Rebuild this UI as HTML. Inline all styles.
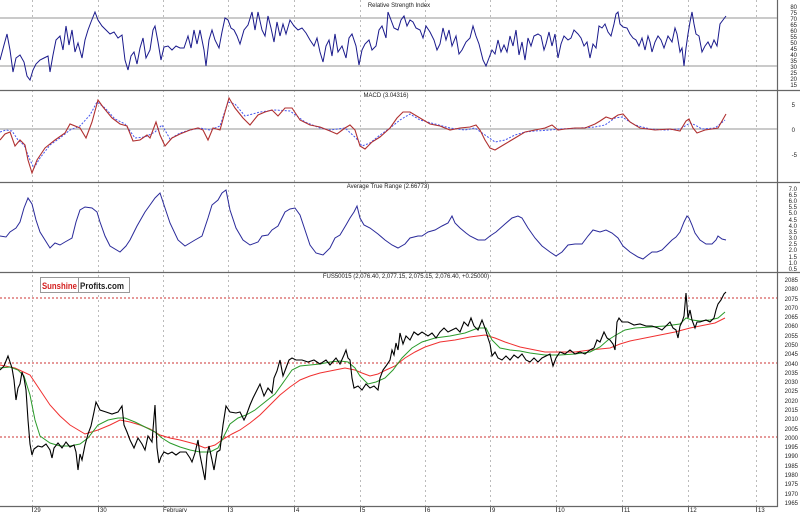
<!DOCTYPE html>
<html><head><meta charset="utf-8"><style>
html,body{margin:0;padding:0;background:#fff;}
svg{display:block;font-family:"Liberation Sans",sans-serif;}
</style></head><body>
<svg width="800" height="512" viewBox="0 0 800 512" xmlns="http://www.w3.org/2000/svg">
<rect width="800" height="512" fill="#fff"/>
<g stroke="#bbb" stroke-width="1" stroke-dasharray="2,3">
<line x1="32.5" y1="0" x2="32.5" y2="506"/><line x1="98.5" y1="0" x2="98.5" y2="506"/>
<line x1="163.5" y1="0" x2="163.5" y2="506"/><line x1="228.5" y1="0" x2="228.5" y2="506"/>
<line x1="294.5" y1="0" x2="294.5" y2="506"/><line x1="360.5" y1="0" x2="360.5" y2="506"/>
<line x1="425.5" y1="0" x2="425.5" y2="506"/><line x1="490.5" y1="0" x2="490.5" y2="506"/>
<line x1="556.5" y1="0" x2="556.5" y2="506"/><line x1="622.5" y1="0" x2="622.5" y2="506"/>
<line x1="688.5" y1="0" x2="688.5" y2="506"/><line x1="756.5" y1="0" x2="756.5" y2="506"/>
</g>
<g stroke="#666" stroke-width="1.2">
<line x1="0" y1="90.5" x2="800" y2="90.5"/><line x1="0" y1="182.5" x2="800" y2="182.5"/>
<line x1="0" y1="272.5" x2="800" y2="272.5"/><line x1="0" y1="506.5" x2="778" y2="506.5"/>
<line x1="777.5" y1="0" x2="777.5" y2="507"/>
</g>
<g stroke="#aaa" stroke-width="1.2">
<line x1="0" y1="18" x2="777" y2="18"/><line x1="0" y1="66" x2="777" y2="66"/>
<line x1="0" y1="129" x2="777" y2="129"/>
</g>
<g font-size="6" fill="#222">
<text x="399" y="7" text-anchor="middle">Relative Strength Index</text>
<text x="386" y="97" text-anchor="middle">MACD (3.04316)</text>
<text x="388" y="188" text-anchor="middle">Average True Range (2.66773)</text>
<text x="406" y="278" text-anchor="middle">FUS50015 (2,076.40, 2,077.15, 2,075.15, 2,076.40, +0.25000)</text>
</g>
<polyline fill="none" stroke="#1a1a8c" stroke-width="1" points="0,60 4,45 7,34 10,50 13,72 16,58 20,55 24,62 27,76 30,80 33,70 36,64 40,60 44,58 48,56 50,72 53,55 56,40 60,36 63,50 66,26 69,45 72,30 75,52 78,43 82,58 85,40 88,30 91,22 95,12 98,20 102,26 106,30 110,34 114,32 118,38 122,35 125,60 128,70 131,56 134,52 137,64 140,48 143,38 146,58 150,50 153,30 155,26 158,42 161,60 164,47 168,46 172,50 176,46 180,48 184,48 188,36 191,48 194,30 197,44 200,30 204,50 206,66 209,40 212,30 215,40 219,48 222,32 225,18 228,20 231,28 234,30 237,36 240,44 244,30 248,25 252,12 255,30 258,12 262,30 265,36 268,16 271,28 274,42 277,22 280,36 283,24 286,34 290,20 294,26 298,30 302,28 306,33 310,40 314,46 317,38 320,52 323,62 326,46 329,40 332,56 335,34 338,52 342,46 346,58 349,38 352,34 356,46 359,65 362,50 365,44 369,40 372,50 376,46 379,30 382,26 386,38 388,12 391,20 394,28 398,30 401,20 404,16 407,26 410,20 413,22 416,28 420,30 423,38 426,26 430,32 434,40 437,50 440,44 443,28 446,40 449,30 452,46 456,36 459,54 462,50 466,42 470,38 473,26 476,36 479,44 483,60 486,66 489,58 492,50 495,54 498,40 501,52 504,45 507,52 510,36 513,46 516,30 519,55 522,42 525,60 528,38 531,46 534,36 538,34 541,36 544,50 546,44 549,32 552,46 555,34 558,58 561,44 564,36 568,40 571,38 574,30 578,34 581,38 584,46 587,42 590,58 593,44 596,48 599,26 602,28 605,24 608,32 611,36 614,24 616,14 618,12 620,24 623,27 627,28 630,34 633,38 636,40 639,46 642,38 645,50 648,36 650,42 652,52 655,42 658,36 661,40 664,48 668,36 672,42 675,28 677,34 680,52 682,48 684,66 686,48 688,34 690,22 692,12 694,24 696,34 699,36 702,52 705,46 708,42 711,48 714,40 717,46 720,24 723,20 726,16"/>
<polyline fill="none" stroke="#4455ee" stroke-width="1" stroke-dasharray="2,1.5" points="0,132 6,130 12,131 18,140 24,145 30,160 34,168 40,158 50,145 60,138 70,130 80,126 90,115 97,102 105,108 115,119 125,124 135,138 145,137 155,132 162,125 170,139 180,133 190,130 200,128 210,130 220,126 228,102 235,104 245,116 260,112 275,110 290,111 305,122 320,128 330,130 345,128 356,138 362,146 370,143 380,135 390,128 400,120 410,114 420,120 435,124 450,128 465,130 475,128 485,135 495,142 505,140 515,135 525,132 535,131 550,130 560,129 580,128 595,127 605,125 615,118 622,117 635,125 650,129 665,130 680,129 690,123 695,125 702,129 715,128 725,120"/>
<polyline fill="none" stroke="#b03030" stroke-width="1.1" points="0,140 5,134 10,132 15,146 20,140 25,145 28,160 32,173 37,160 45,148 55,140 65,133 70,124 80,128 86,138 92,122 98,100 103,107 112,118 120,124 127,126 133,141 140,140 147,135 150,138 156,122 160,135 165,146 172,138 180,134 190,130 198,128 203,130 208,140 213,128 220,130 225,112 229,98 235,108 243,118 250,125 258,115 265,112 272,110 278,116 285,108 292,108 300,120 310,125 320,127 330,131 337,134 345,128 350,125 355,130 360,146 365,149 372,142 380,137 390,128 397,118 403,112 410,112 420,118 430,124 440,126 450,130 460,128 470,127 476,125 480,130 485,140 490,148 495,150 505,144 515,138 525,132 535,130 545,128 552,125 558,130 565,129 575,128 585,128 595,124 600,121 606,117 612,119 618,115 623,114 630,122 640,128 655,130 670,129 680,131 686,121 689,119 693,128 697,133 705,130 712,129 718,128 722,121 726,114"/>
<polyline fill="none" stroke="#2a2a9a" stroke-width="1" points="0,236 6,237 10,232 16,228 20,222 24,208 28,198 32,204 36,220 40,232 45,240 50,248 55,243 60,245 65,242 72,238 76,222 80,210 85,207 92,208 97,212 100,222 105,236 110,246 120,252 126,246 130,240 137,226 145,212 150,205 155,198 160,193 164,205 170,223 178,240 185,246 190,243 195,240 202,236 208,218 212,205 218,200 222,193 226,190 230,210 236,228 243,240 250,245 258,242 262,236 268,235 272,230 278,226 285,212 290,209 295,208 300,215 305,230 310,245 316,253 323,255 330,248 335,238 340,235 346,225 350,218 354,212 357,206 360,218 364,225 370,228 378,234 385,240 392,245 398,248 405,244 410,238 418,236 422,236 428,232 435,230 442,226 448,223 452,216 455,223 460,228 466,233 470,236 478,240 485,240 490,236 496,232 505,224 512,218 518,216 522,218 528,228 535,238 542,246 550,252 556,256 562,252 568,245 575,244 582,244 588,236 593,230 600,232 606,230 612,233 618,238 623,246 630,252 638,257 643,259 648,255 652,252 657,252 662,250 667,245 672,240 676,237 680,232 684,222 687,216 689,218 692,225 695,233 700,240 706,244 712,244 716,240 718,236 722,239 726,240"/>
<g stroke="#c33" stroke-width="1" stroke-dasharray="2,2">
<line x1="0" y1="298" x2="777" y2="298"/><line x1="0" y1="363" x2="777" y2="363"/><line x1="0" y1="437" x2="777" y2="437"/>
</g>
<polyline fill="none" stroke="#f03030" stroke-width="1" points="0,365 15,368 30,375 40,390 50,405 60,416 70,425 85,434 98,430 110,425 120,420 130,422 140,425 150,429 160,435 170,438 180,440 195,444 205,448 215,445 222,440 232,434 240,430 250,423 260,415 270,405 280,395 290,387 300,380 310,376 320,373 335,370 345,368 355,370 362,373 370,376 378,374 386,370 395,366 405,358 415,352 425,347 440,342 455,340 470,337 485,335 495,338 505,342 520,347 535,350 545,352 560,352 575,352 590,350 600,349 610,348 620,344 630,341 645,338 660,335 675,332 690,328 705,325 715,323 725,318"/>
<polyline fill="none" stroke="#2a9a2a" stroke-width="1" points="0,368 10,367 18,370 24,376 30,395 35,420 40,436 50,443 60,446 70,446 80,444 88,438 98,425 108,420 118,418 125,418 135,422 145,427 155,432 162,438 170,443 180,447 190,450 200,452 210,452 218,448 224,436 230,424 238,418 246,415 255,410 265,402 275,394 285,380 292,370 300,366 310,365 320,364 330,362 340,361 348,362 355,368 360,376 368,384 376,382 385,378 393,370 402,358 412,348 422,342 435,338 450,336 465,333 478,328 486,328 492,340 500,348 510,350 520,351 530,353 545,355 560,355 575,354 590,352 600,347 608,340 616,335 625,330 635,328 650,327 665,326 680,324 686,318 692,320 700,321 710,320 718,318 725,312"/>
<polyline fill="none" stroke="#000" stroke-width="1.1" points="0,370 4,366 8,356 10,362 12,368 14,380 16,400 18,388 20,384 22,372 24,378 26,390 28,420 30,444 32,455 34,449 38,446 42,447 46,444 50,450 52,458 54,448 58,443 62,448 66,442 70,447 74,445 76,452 78,470 80,454 82,460 85,445 88,434 91,426 94,412 96,402 100,410 106,412 112,414 118,412 122,406 124,425 127,432 130,440 134,448 138,438 142,444 145,450 148,436 152,442 155,405 157,448 159,463 161,457 164,452 168,454 172,452 176,455 180,452 186,452 190,458 192,462 195,453 198,440 200,455 203,470 205,480 207,455 209,446 212,460 214,470 217,452 220,450 223,425 226,406 230,412 236,413 240,412 244,420 246,416 250,405 253,398 256,392 258,388 260,384 264,396 268,388 272,393 274,378 277,371 280,360 283,376 286,368 289,360 292,358 296,360 302,360 308,362 314,360 320,364 326,360 330,365 336,358 340,364 344,355 346,350 348,358 350,360 352,378 354,388 358,386 362,390 366,384 370,388 374,386 378,390 380,378 383,370 386,366 390,360 392,350 394,355 396,343 398,350 400,333 403,344 406,336 410,340 414,332 418,335 422,332 428,336 432,333 436,338 440,332 444,328 448,332 452,330 456,328 460,332 464,322 468,326 471,318 474,326 478,330 482,320 485,328 488,338 490,344 492,356 495,352 498,358 502,360 506,356 510,360 514,355 518,358 522,354 526,360 530,362 534,358 538,362 542,358 546,356 550,354 553,366 556,358 560,352 565,354 570,350 575,354 580,352 585,354 590,350 594,348 597,340 600,342 604,332 607,338 610,340 613,344 615,350 617,322 619,318 622,322 628,322 634,325 640,324 646,326 652,326 658,328 662,330 666,326 670,322 673,328 676,330 678,338 680,326 682,322 684,316 686,293 688,318 690,310 692,320 695,328 697,322 700,322 706,320 710,322 714,318 716,310 718,304 721,300 724,294 726,292"/>
<rect x="40.5" y="277.5" width="89" height="15" fill="#fff" stroke="#999"/>
<line x1="78.5" y1="277.5" x2="78.5" y2="292.5" stroke="#999"/>
<text x="42" y="289" font-size="9" font-weight="bold" fill="#d42020" textLength="35" lengthAdjust="spacingAndGlyphs">Sunshine</text>
<text x="80" y="289" font-size="9" font-weight="bold" fill="#222" textLength="44" lengthAdjust="spacingAndGlyphs">Profits.com</text>
<g font-size="6" fill="#222" text-anchor="end">
<text x="797" y="9">80</text><text x="797" y="15">75</text><text x="797" y="21">70</text><text x="797" y="27">65</text><text x="797" y="33">60</text><text x="797" y="39">55</text><text x="797" y="45">50</text><text x="797" y="51">45</text><text x="797" y="57">40</text><text x="797" y="63">35</text><text x="797" y="69">30</text><text x="797" y="75">25</text><text x="797" y="81">20</text><text x="797" y="87">15</text>
<text x="795" y="107">5</text><text x="795" y="132">0</text><text x="797" y="157">-5</text>
<text x="797" y="191">7.0</text><text x="797" y="197">6.5</text><text x="797" y="203">6.0</text><text x="797" y="209">5.5</text><text x="797" y="215">5.0</text><text x="797" y="222">4.5</text><text x="797" y="228">4.0</text><text x="797" y="234">3.5</text><text x="797" y="240">3.0</text><text x="797" y="246">2.5</text><text x="797" y="252">2.0</text><text x="797" y="259">1.5</text><text x="797" y="265">1.0</text><text x="797" y="271">0.5</text>
<text x="798" y="282">2085</text><text x="798" y="291">2080</text><text x="798" y="301">2075</text><text x="798" y="310">2070</text><text x="798" y="319">2065</text><text x="798" y="328">2060</text><text x="798" y="338">2055</text><text x="798" y="347">2050</text><text x="798" y="356">2045</text><text x="798" y="366">2040</text><text x="798" y="375">2035</text><text x="798" y="384">2030</text><text x="798" y="393">2025</text><text x="798" y="403">2020</text><text x="798" y="412">2015</text><text x="798" y="421">2010</text><text x="798" y="431">2005</text><text x="798" y="440">2000</text><text x="798" y="449">1995</text><text x="798" y="458">1990</text><text x="798" y="468">1985</text><text x="798" y="477">1980</text><text x="798" y="486">1975</text><text x="798" y="496">1970</text><text x="798" y="505">1965</text>
</g>
<g font-size="6" fill="#222">
<line x1="32.5" y1="506" x2="32.5" y2="512" stroke="#666"/><text x="34" y="512">29</text>
<line x1="98.5" y1="506" x2="98.5" y2="512" stroke="#666"/><text x="100" y="512">30</text>
<text x="163" y="512">February</text>
<line x1="228.5" y1="506" x2="228.5" y2="512" stroke="#666"/><text x="230" y="512">3</text>
<line x1="294.5" y1="506" x2="294.5" y2="512" stroke="#666"/><text x="296" y="512">4</text>
<line x1="360.5" y1="506" x2="360.5" y2="512" stroke="#666"/><text x="362" y="512">5</text>
<line x1="425.5" y1="506" x2="425.5" y2="512" stroke="#666"/><text x="427" y="512">6</text>
<line x1="490.5" y1="506" x2="490.5" y2="512" stroke="#666"/><text x="492" y="512">9</text>
<line x1="556.5" y1="506" x2="556.5" y2="512" stroke="#666"/><text x="558" y="512">10</text>
<line x1="622.5" y1="506" x2="622.5" y2="512" stroke="#666"/><text x="624" y="512">11</text>
<line x1="688.5" y1="506" x2="688.5" y2="512" stroke="#666"/><text x="690" y="512">12</text>
<line x1="756.5" y1="506" x2="756.5" y2="512" stroke="#666"/><text x="758" y="512">13</text>
</g>
</svg>
</body></html>
